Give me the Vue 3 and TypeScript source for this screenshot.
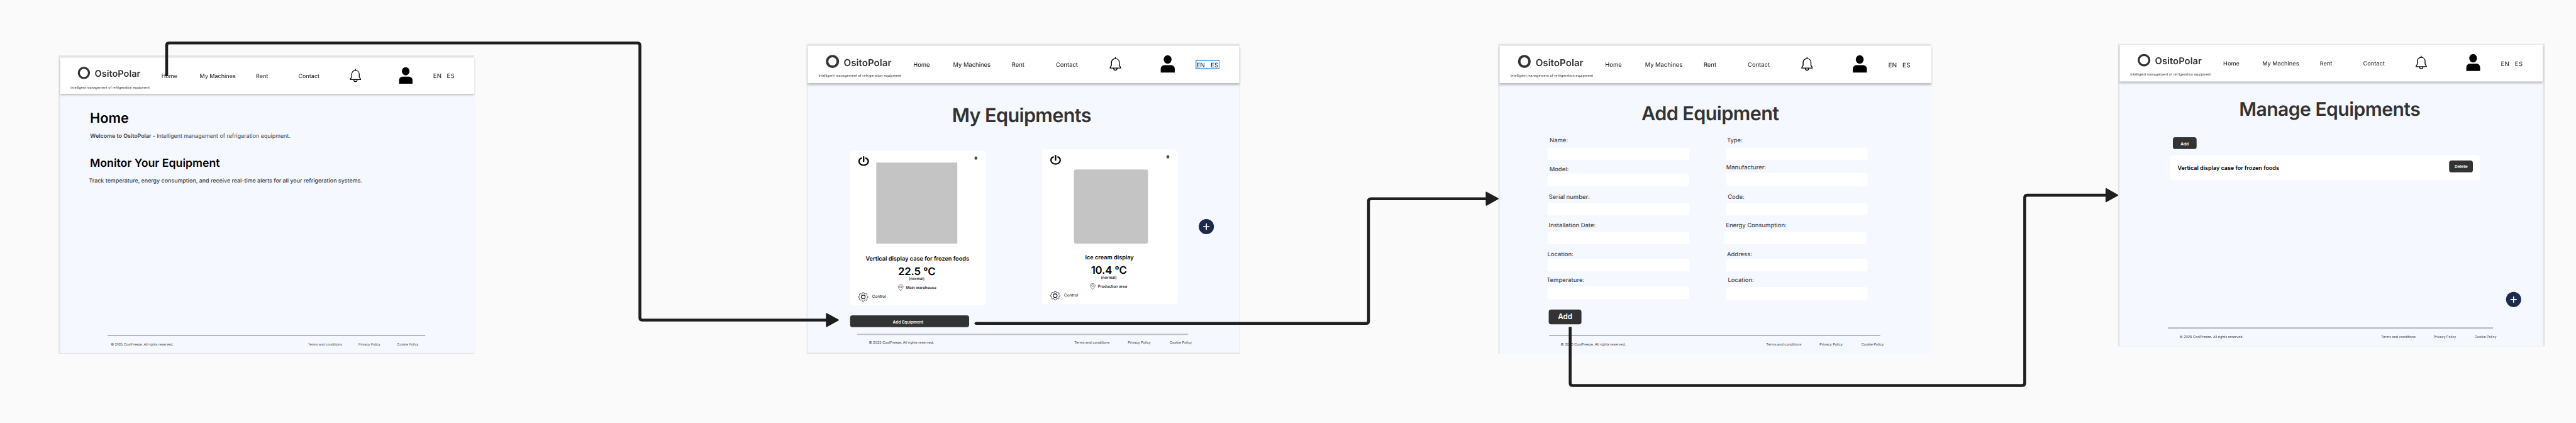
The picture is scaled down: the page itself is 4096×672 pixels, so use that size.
<script setup lang="ts">
interface Field {
  label: string
  before: number
  gap: number
  inset: number
  shift?: number
}

interface Equipment {
  kind: string
  name: string
  temp: string
  place: string
}

const screens = ['home', 'list', 'form', 'manage'] as const

const equipments: Equipment[] = [
  { kind: 'tall', name: 'Vertical display case for frozen foods', temp: '22.5 °C', place: 'Main warehouse' },
  { kind: 'small', name: 'Ice cream display', temp: '10.4 °C', place: 'Production area' },
]

const columns: Field[][] = [
  [
    { label: 'Name:', before: 35.1, gap: 11, inset: 5.4 },
    { label: 'Model:', before: 14.1, gap: 4.3, inset: 4.7 },
    { label: 'Serial number:', before: 17.5, gap: 8.7, inset: 3.3 },
    { label: 'Installation Date:', before: 16.1, gap: 8.7, inset: 3.1 },
    { label: 'Location:', before: 17.1, gap: 4.3, inset: -0.2 },
    { label: 'Temperature:', before: 12.5, gap: 10, inset: -2.1 },
  ],
  [
    { label: 'Type:', before: 35.1, gap: 11, inset: 2.6 },
    { label: 'Manufacturer:', before: 9.1, gap: 7.3, inset: 0.8 },
    { label: 'Code:', before: 19.5, gap: 8.7, inset: 4.7 },
    { label: 'Energy Consumption:', before: 16.1, gap: 8.7, inset: 0.2, shift: -3.7 },
    { label: 'Address:', before: 17.1, gap: 4.3, inset: 2.8 },
    { label: 'Location:', before: 12.5, gap: 11, inset: 5.1 },
  ],
]

const labelStyle = (f: Field) => ({ margin: `${f.before}px 0 ${f.gap}px ${f.inset}px` })
const inputStyle = (f: Field) => ({ marginLeft: `${f.shift ?? 0}px` })
</script>

<template>
  <div class="viewport">
    <div class="canvas">
      <section v-for="screen in screens" :key="screen" class="frame" :class="`frame-${screen}`">
        <div class="screen">
          <header class="header">
            <div class="brand">
              <div class="brand-row">
                <span class="ring"></span>
                <span class="brand-name">OsitoPolar</span>
              </div>
              <p class="slogan">Intelligent management of refrigeration equipment</p>
            </div>
            <a class="nav">Home</a>
            <a class="nav">My Machines</a>
            <a class="nav">Rent</a>
            <a class="nav">Contact</a>
            <svg class="bell" viewBox="0 0 28.3 33.6">
              <path d="M14.1 .4V4.2M14.1 4.2C8.4 4.2 4.6 8.3 4.6 13.6V19.8C4.6 22.6 1.2 23.4 1.2 27.3H27.1C27.1 23.4 23.7 22.6 23.7 19.8V13.6C23.7 8.3 19.9 4.2 14.1 4.2ZM10 28.3a4.15 4.15 0 0 0 8.3 0" />
            </svg>
            <svg class="user" viewBox="0 0 34.3 42">
              <ellipse cx="16.9" cy="10.4" rx="9.6" ry="10.4" />
              <path d="M0 42V33.5C0 27.6 4 24 9.6 24H24.7C30.3 24 34.3 27.6 34.3 33.5V42Z" />
            </svg>
            <div class="lang"><span>EN</span><span>ES</span></div>
          </header>

          <main v-if="screen === 'home'" class="home">
            <h1>Home</h1>
            <p class="welcome"><b>Welcome to OsitoPolar - </b>Intelligent management of refrigeration equipment.</p>
            <h2>Monitor Your Equipment</h2>
            <p class="track">Track temperature, energy consumption, and receive real-time alerts for all your refrigeration systems.</p>
          </main>

          <main v-else-if="screen === 'list'">
            <h1 class="title">My Equipments</h1>
            <div class="cards">
              <article v-for="item in equipments" :key="item.name" class="card" :class="item.kind">
                <div class="card-top">
                  <svg class="power" viewBox="0 0 26.3 24.3">
                    <path d="M7.6 5.2C4.2 6.6 1.8 9.4 1.8 13.1C1.8 18.3 6.6 22.5 13.15 22.5S24.5 18.3 24.5 13.1C24.5 9.4 22.1 6.6 18.7 5.2M13.15 1.8V13.2" />
                  </svg>
                  <div class="photo"></div>
                  <span class="dot"></span>
                </div>
                <h3>{{ item.name }}</h3>
                <p class="temp">{{ item.temp }}</p>
                <p class="state">(normal)</p>
                <div class="place">
                  <svg class="pin" viewBox="0 0 13.3 15.3">
                    <path d="M6.65 14.8C4 11.2 .6 8.6 .6 5.6C.6 2.7 3.3 .5 6.65 .5S12.7 2.7 12.7 5.6C12.7 8.6 9.3 11.2 6.65 14.8Z" />
                    <ellipse cx="6.65" cy="5.5" rx="2.6" ry="2.2" />
                  </svg>
                  <span>{{ item.place }}</span>
                </div>
                <div class="control">
                  <svg class="gear" viewBox="0 0 24.3 22.3">
                    <path d="M10.2 .7H14.1L14.9 3.4L17.1 4.2L19.6 2.9L22.1 5.2L20.8 7.6L21.6 9.3L23.7 9.7V12.6L21.6 13.1L20.8 14.8L22.1 17.2L19.6 19.5L17.1 18.2L14.9 19L14.1 21.6H10.2L9.4 19L7.2 18.2L4.7 19.5L2.2 17.2L3.5 14.8L2.7 13.1L.6 12.6V9.7L2.7 9.3L3.5 7.6L2.2 5.2L4.7 2.9L7.2 4.2L9.4 3.4Z" />
                    <ellipse class="hub" cx="12.15" cy="11.2" rx="4.7" ry="4.5" />
                  </svg>
                  <span>Control</span>
                </div>
              </article>
              <button class="fab">
                <svg viewBox="0 0 37 37"><path d="M18.5 11.7V25.3M11.7 18.5H25.3" /></svg>
              </button>
            </div>
            <button class="btn btn-wide">Add Equipment</button>
          </main>

          <main v-else-if="screen === 'form'">
            <h1 class="title">Add Equipment</h1>
            <form class="form">
              <div v-for="(fields, c) in columns" :key="c" class="column">
                <div v-for="(f, i) in fields" :key="i" class="field">
                  <label :style="labelStyle(f)">{{ f.label }}</label>
                  <div class="input" :style="inputStyle(f)"></div>
                </div>
              </div>
            </form>
            <button class="btn btn-add">Add</button>
          </main>

          <main v-else>
            <h1 class="title">Manage Equipments</h1>
            <button class="btn btn-small btn-new">Add</button>
            <div class="row">
              <span class="row-name">Vertical display case for frozen foods</span>
              <button class="btn btn-small">Delete</button>
            </div>
            <button class="fab">
              <svg viewBox="0 0 37 37"><path d="M18.5 11.7V25.3M11.7 18.5H25.3" /></svg>
            </button>
          </main>

          <footer class="footer">
            <div class="rule"></div>
            <div class="legal">
              <span>© 2025 CoolFreeze. All rights reserved.</span>
              <span>Terms and conditions</span>
              <span>Privacy Policy</span>
              <span>Cookie Policy</span>
            </div>
          </footer>
        </div>
      </section>

      <svg class="links" viewBox="0 0 6294 1033">
        <path d="M407.2 186V111Q407.2 105 413.2 105H1557.5Q1563.5 105 1563.5 111V775.6Q1563.5 781.6 1569.5 781.6H2022" />
        <path d="M2387 789.8H3337.7Q3343.7 789.8 3343.7 783.8V491.3Q3343.7 485.3 3349.7 485.3H3634" />
        <path d="M3836.4 798.3V935.5Q3836.4 941.5 3842.4 941.5H4941Q4947 941.5 4947 935.5V482.7Q4947 476.7 4953 476.7H5148" />
        <path class="head" d="M2019.5 766V797.2L2048 781.6Z" />
        <path class="head" d="M3631.5 469.7V500.9L3660 485.3Z" />
        <path class="head" d="M5146 461.1V492.3L5174 476.7Z" />
        <path class="tail" d="M2380 790L2384 786.3H2389V793.3H2384Z" />
      </svg>
    </div>
  </div>
</template>

<style>
html,
body {
  margin: 0;
  background: #fafafa;
  overflow: hidden;
}
</style>

<style scoped>
.viewport {
  width: 4096px;
  height: 672px;
  overflow: hidden;
  background: #fafafa;
}
.canvas {
  position: relative;
  width: 6294px;
  height: 1033px;
  transform: scale(0.65078, 0.65053);
  transform-origin: 0 0;
  font-family: "Inter", "Liberation Sans", sans-serif;
  line-height: 1;
  text-rendering: geometricPrecision;
  white-space: nowrap;
}
h1, h2, h3, p {
  margin: 0;
  line-height: 1;
}
svg {
  display: block;
  overflow: visible;
}
button {
  display: flex;
  align-items: center;
  justify-content: center;
  border: 0;
  padding: 0;
  font-family: inherit;
  line-height: 1;
}

/* Frames on the canvas */
.frame {
  position: absolute;
  box-sizing: border-box;
  background: #e5e5e5;
  --s: 1;
}
.frame-home { left: 142.7px; top: 135px; width: 1016.6px; height: 729px; padding: 6.4px 0 2px 4px; --s: 0.96; }
.frame-list { left: 1971px; top: 107px; width: 1058px; height: 757.1px; padding: 4.5px 1px 3px 2.3px; }
.frame-form { left: 3661px; top: 107px; width: 1058px; height: 757px; padding: 4.5px 0 0 2.8px; }
.frame-manage { left: 5175px; top: 107px; width: 1042.7px; height: 739px; padding: 2.3px 4.5px 1.3px 3.8px; --s: 0.981; }
.screen {
  height: 100%;
  display: flex;
  flex-direction: column;
  background: #f5f8ff;
}

/* Header */
.header {
  zoom: var(--s);
  position: relative;
  z-index: 1;
  flex: none;
  box-sizing: border-box;
  height: 91.5px;
  padding-left: 26.8px;
  display: grid;
  grid-template-columns: 231.4px 97.3px 143.3px 107.8px 130.9px 125.7px 84.6px auto;
  align-items: start;
  justify-content: start;
  background: #fff;
  box-shadow: 0 4px 5px rgba(0, 0, 0, 0.25);
}
.brand { padding-top: 22.8px; }
.brand-row {
  display: flex;
  align-items: flex-start;
  height: 31.4px;
  padding-left: 18.4px;
}
.ring {
  box-sizing: border-box;
  width: 31.4px;
  height: 31.4px;
  border: 6px solid #333;
  border-radius: 50%;
}
.brand-name {
  margin: 6.8px 0 0 11.5px;
  font-size: 23.3px;
  font-weight: 600;
  color: #333;
}
.slogan {
  margin-top: 16.7px;
  font-size: 8.5px;
  color: #3c3c3c;
}
.nav {
  margin-top: 40.5px;
  font-size: 14.3px;
  font-weight: 550;
  color: #333;
}
.bell {
  width: 28.3px;
  height: 33.6px;
  margin-top: 27.2px;
  fill: none;
  stroke: #000;
  stroke-width: 2.1;
}
.user {
  width: 34.3px;
  height: 42px;
  margin-top: 23.5px;
}
.lang {
  box-sizing: border-box;
  width: 58.7px;
  height: 22.7px;
  margin-top: 34.8px;
  padding: 4.3px 0 0 2px;
  display: grid;
  grid-template-columns: 34.9px auto;
  justify-content: start;
  font-size: 15.45px;
  font-weight: 500;
  color: #333;
}
.frame-list .lang { box-shadow: inset 0 0 0 2.2px #2196f3; }

/* Home */
.home { padding-left: 73px; }
.home h1 {
  margin-top: 43.3px;
  font-size: 33.4px;
  font-weight: 600;
}
.welcome {
  margin: 21.1px 0 0 0.6px;
  font-size: 13.62px;
  color: #3f3f42;
}
.welcome b { font-weight: 600; white-space: pre; }
.home h2 {
  margin-top: 43.8px;
  font-size: 27.2px;
  font-weight: 600;
}
.track {
  margin: 24.1px 0 0 -2.2px;
  font-size: 13.63px;
  font-weight: 550;
  color: #38383a;
}

/* Titles */
.title {
  font-size: 47px;
  font-weight: 600;
  color: #333;
}
.frame-list .title { margin: 55.2px 0 0 352.7px; letter-spacing: -0.95px; }
.frame-form .title { margin: 50.6px 0 0 346.8px; letter-spacing: -0.91px; }
.frame-manage .title { margin: 45.2px 0 0 292px; font-size: 46.2px; letter-spacing: -0.81px; }

/* Equipment cards */
.cards {
  display: flex;
  align-items: flex-start;
  margin-top: 59.5px;
  padding-left: 103.7px;
}
.card {
  width: 330.7px;
  height: 378px;
  border-radius: 7px;
  background: #fff;
  text-align: center;
}
.card.tall { margin: 3px 138.6px 0 0; }
.card-top {
  display: flex;
  align-items: flex-start;
  height: 231px;
}
.power {
  width: 26.3px;
  height: 24.3px;
  margin: 13.6px 0 0 19.7px;
  fill: none;
  stroke: #000;
  stroke-width: 3.4;
  stroke-linecap: round;
}
.photo { background: #c4c4c4; }
.tall .photo { width: 198px; height: 197.7px; margin: 29.6px 0 0 18px; }
.small .photo { width: 181px; height: 180.8px; margin: 49.4px 0 0 31.9px; border-radius: 5px; }
.dot {
  width: 7.5px;
  height: 7.5px;
  margin: 14.6px 0 0 41.7px;
  border-radius: 50%;
  background: #4d4d4d;
}
.small .dot { margin-left: 44.8px; }
.card h3 {
  margin: 25.9px 1.8px 0 0;
  font-size: 14.07px;
  font-weight: 600;
}
.temp {
  margin: 11.7px 4.6px 0 0;
  font-size: 25.8px;
  font-weight: 600;
  letter-spacing: -0.28px;
}
.state {
  margin: 0.8px 5.2px 0 0;
  font-size: 9.5px;
  font-weight: 500;
}
.place {
  display: flex;
  height: 15.3px;
  margin: 8.2px 0 0 116.7px;
  font-size: 9.32px;
  font-weight: 600;
  color: #1c1c1c;
}
.pin {
  width: 13.3px;
  height: 15.3px;
  fill: none;
  stroke: #222;
  stroke-width: 0.9;
}
.place span { margin: 4.1px 0 0 6.4px; }
.control {
  display: flex;
  margin: 4px 0 0 19.7px;
  font-size: 9.67px;
  font-weight: 500;
  color: #1c1c1c;
}
.gear {
  width: 24.3px;
  height: 22.3px;
  fill: none;
  stroke: #111;
  stroke-width: 1.1;
  stroke-linejoin: round;
}
.gear .hub { stroke-width: 1.7; }
.control span { margin: 6.4px 0 0 9.9px; }

/* Buttons */
.btn {
  border-radius: 6px;
  background: #333;
  color: #fff;
  font-weight: 600;
}
.btn-wide {
  width: 291px;
  height: 29.3px;
  margin: 24.3px 0 0 103.7px;
  padding: 2.8px 7.5px 0 0;
  box-sizing: border-box;
  font-size: 10.1px;
}
.btn-add {
  width: 80.7px;
  height: 35.7px;
  margin: 24.6px 0 0 120px;
  font-size: 17.9px;
}
.btn-small {
  width: 58.2px;
  height: 28.7px;
  padding-top: 2px;
  box-sizing: border-box;
  font-size: 10.13px;
}
.btn-new { margin: 44.8px 0 0 129.9px; }
.fab {
  width: 36.6px;
  height: 37px;
  border-radius: 50%;
  background: #1c2a50;
}
.fab svg {
  width: 37px;
  height: 37px;
  stroke: #fff;
  stroke-width: 2.4;
  stroke-linecap: round;
}
.frame-list .fab { margin: 170.2px 0 0 52.3px; }
.frame-manage .fab { margin: 273px 0 0 944.2px; }

/* Form */
.form {
  display: grid;
  grid-template-columns: 346.5px 346.5px;
  column-gap: 89.3px;
  margin-top: -0.5px;
  padding-left: 117.2px;
}
.field { display: flow-root; }
.field label {
  display: block;
  height: 14.5px;
  font-size: 14.4px;
  line-height: 17.8px;
  font-weight: 550;
  color: #4a4a4d;
}
.input {
  width: 346.5px;
  height: 30.7px;
  border-radius: 6px;
  background: #fff;
}

/* Managed equipment */
.row {
  display: flex;
  align-items: flex-start;
  justify-content: space-between;
  box-sizing: border-box;
  width: 757.5px;
  height: 61px;
  margin: 15px 0 0 122.9px;
  padding: 13px 16.8px 0 18.7px;
  border-radius: 7px;
  background: #fff;
}
.row-name {
  margin-top: 12.6px;
  font-size: 13.81px;
  font-weight: 600;
}

/* Footer */
.footer {
  zoom: var(--s);
  height: 46px;
  margin-top: auto;
}
.rule {
  width: 809px;
  height: 2px;
  margin-left: 121px;
  background: #909398;
}
.frame-list .rule { height: 3px; background: #bcc0c5; }
.legal {
  display: grid;
  grid-template-columns: 502px 130.7px 102.1px auto;
  justify-content: start;
  padding: 17.5px 0 0 149.5px;
  font-size: 8.48px;
  color: #3c3c3c;
}
.frame-list .legal { padding-top: 16.3px; }
.frame-home .legal { grid-template-columns: 502px 127.9px 98.6px auto; padding-left: 129.3px; }

/* Connectors */
.links {
  position: absolute;
  left: 0;
  top: 0;
  z-index: 2;
  width: 6294px;
  height: 1033px;
  fill: none;
  stroke: #1e1e1e;
  stroke-width: 7;
}
.links .head {
  fill: #1e1e1e;
  stroke-width: 3;
  stroke-linejoin: round;
}
.links .tail {
  fill: #1e1e1e;
  stroke: none;
}
</style>
